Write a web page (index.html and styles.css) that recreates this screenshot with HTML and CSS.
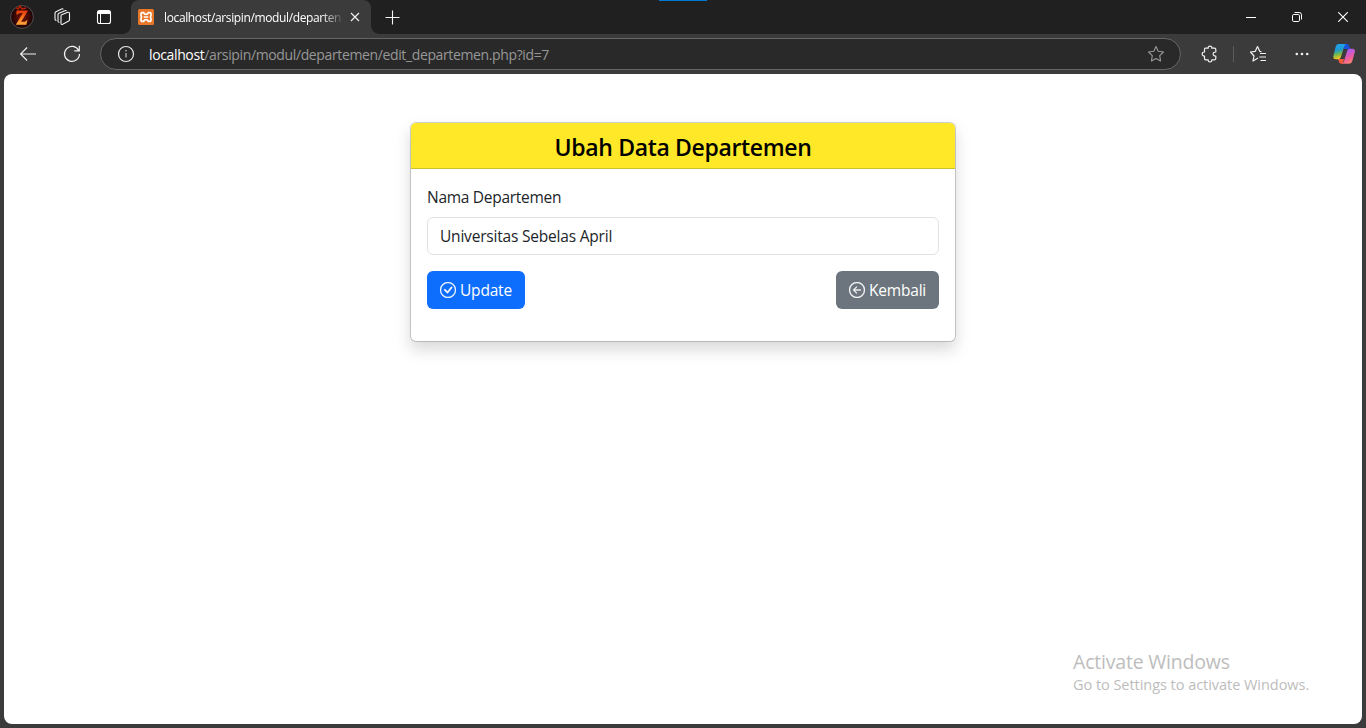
FILE: index.html
```html
<!DOCTYPE html>
<html lang="id">
<head>
<meta charset="utf-8">
<title>Ubah Data Departemen</title>
<link rel="stylesheet" href="styles.css">
</head>
<body>
<div class="browser">
  <div class="titlebar">
    <div class="cell cell-profile">
      <svg width="24" height="24" viewBox="0 0 24 24">
        <defs>
          <radialGradient id="glow"><stop offset="0" stop-color="#7a1405"/><stop offset=".65" stop-color="#3a0806"/><stop offset="1" stop-color="#160506"/></radialGradient>
          <linearGradient id="fire" x2="0" y2="1"><stop offset="0" stop-color="#e3340c"/><stop offset=".55" stop-color="#ff7d22"/><stop offset="1" stop-color="#ffa53c"/></linearGradient>
        </defs>
        <circle cx="12" cy="12" r="11.4" fill="url(#glow)" stroke="#66605f" stroke-width=".8"/>
        <path d="M6 2.5 8 4l2-3 2 3 4-1" fill="none" stroke="#b32508" stroke-width="1.4"/>
        <path d="M6.5 5.5H18l-6.8 11.2h3.6l2.7-2-1.2 5H5.8l7-11.6H9.6L6.5 10z" fill="url(#fire)"/>
      </svg>
    </div>
    <div class="cell cell-work">
      <svg width="18" height="18" viewBox="0 0 18 18" fill="none" stroke="#f2f2f2" stroke-width="1.1" stroke-linejoin="round" stroke-linecap="round">
        <path d="M8.6 6.8 14.8 4.3Q16.5 3.8 16.5 5.5V11.6Q16.5 12.6 15.7 13.1L9.7 16.2Q8 17 8 15.2V8.2Q8 7.1 8.6 6.8z"/>
        <path d="M13.2 2.7Q12.6 2.3 11.8 2.7L6 5.3Q5 5.8 5 6.8V13Q5 14.2 6 14.3"/>
        <path d="M10 1Q9.3.8 8.6 1.1L3 3.8Q2 4.3 2 5.3V11Q2 12.2 3 12.4"/>
      </svg>
    </div>
    <div class="cell cell-tabs">
      <svg width="16" height="16" viewBox="0 0 16 16">
        <rect x="1.5" y="1.5" width="13" height="13" rx="2" fill="none" stroke="#fff" stroke-width="1.1"/>
        <path d="M1.5 5V3.5a2 2 0 0 1 2-2h9a2 2 0 0 1 2 2V5z" fill="#fff"/>
        <path d="M4.5 5v9.5" stroke="#fff"/>
      </svg>
    </div>
    <div class="tab">
      <svg width="16" height="16" viewBox="0 0 16 16">
        <rect width="16" height="16" rx="1.5" fill="#e9772a"/>
        <path d="M4.2 3.6H5.6Q6.3 5.3 8 5.3T10.4 3.6H11.8Q13 3.6 13 4.8V6.3Q13 8 11.7 8 13 8 13 9.7V11.2Q13 12.4 11.8 12.4H10.4Q9.7 10.7 8 10.7T5.6 12.4H4.2Q3 12.4 3 11.2V9.7Q3 8 4.3 8 3 8 3 6.3V4.8Q3 3.6 4.2 3.6zM5.8 8H10.2" fill="none" stroke="#fff" stroke-width="1.7"/>
      </svg>
      <span class="tab-title">localhost/arsipin/modul/departen</span>
      <svg class="tab-close" width="10" height="10" viewBox="0 0 10 10"><path d="M1 1 9 9M9 1 1 9" stroke="#f0f0f0" stroke-width="1.2"/></svg>
    </div>
    <div class="cell cell-new">
      <svg width="15" height="15" viewBox="0 0 15 15"><path d="M.5 7.5h14M7.5.5v14" stroke="#f5f5f5" stroke-width="1.1"/></svg>
    </div>
    <div class="window-controls">
      <div class="cell cell-win"><svg width="10" height="10" viewBox="0 0 10 10"><path d="M0 5.5h10" stroke="#fff"/></svg></div>
      <div class="cell cell-win"><svg width="10" height="10" viewBox="0 0 10 10" fill="none" stroke="#fff"><rect x=".5" y="2.5" width="7" height="7" rx="1.3"/><path d="M2.5.5H7.2A2.3 2.3 0 0 1 9.5 2.8V7.5"/></svg></div>
      <div class="cell cell-win"><svg width="10" height="10" viewBox="0 0 10 10"><path d="M.2.2 9.8 9.8M9.8.2.2 9.8" stroke="#fff" stroke-width="1.1"/></svg></div>
    </div>
    <div class="indicator"></div>
  </div>

  <div class="toolbar">
    <div class="cell cell-back"><svg width="16" height="14" viewBox="0 0 16 14" fill="none" stroke="#f0f0f0" stroke-width="1.1"><path d="M16 7H.8M7.1.5.6 7l6.5 6.5"/></svg></div>
    <div class="cell cell-reload"><svg width="18" height="18" viewBox="0 0 18 18" fill="none" stroke="#f0f0f0" stroke-width="1.2"><path d="M15.7 5.5A7.5 7.5 0 1 0 16.5 9M16.3.8v5h-5"/></svg></div>
    <div class="address">
      <svg width="18" height="18" viewBox="0 0 18 18"><circle cx="9" cy="9" r="7.5" fill="none" stroke="#e8e8e8" stroke-width="1.2"/><path d="M9 8v4.5" stroke="#d0d0d0" stroke-width="1.1"/><circle cx="9" cy="5.7" r=".8" fill="#d0d0d0"/></svg>
      <div class="url"><span class="host">localhost</span>/arsipin/modul/departemen/edit_departemen.php?id=7</div>
      <svg class="fav" width="18" height="18" viewBox="0 0 18 18" fill="none" stroke="#999" stroke-width="1.1" stroke-linejoin="round"><path d="M9 1.5 11.2 6.3 16.5 7 12.7 10.7 13.6 16 9 13.5 4.4 16 5.3 10.7 1.5 7 6.8 6.3z"/></svg>
    </div>
    <div class="cell cell-ext"><svg width="18" height="18" viewBox="0 0 18 18" fill="none" stroke="#f0f0f0" stroke-width="1.2" stroke-linejoin="round"><path d="M4.2 3.2H7.2Q7 1.2 9 1.2T10.8 3.2H13.6Q14.8 3.2 14.8 4.4V7Q12.2 6.8 12.2 9T14.8 11V13.6Q14.8 14.8 13.6 14.8H10.8Q11 16.8 9 16.8T7.2 14.8H4.7Q3.5 14.8 3.5 13.6V11Q1.2 11 1.2 9T3.5 7V4.4Q3.5 3.2 4.2 3.2z"/></svg></div>
    <div class="separator"></div>
    <div class="cell cell-tool"><svg width="18" height="18" viewBox="0 0 18 18" fill="none" stroke="#f0f0f0" stroke-width="1.2" stroke-linejoin="round"><path d="M9 13 4 16 5 11 1.5 7 6.3 6.3 8.5 1.5 10.7 6.3 12.5 6.6M11 8.5H17M10.3 12H17M11.5 15.5H17"/></svg></div>
    <div class="cell cell-tool"><svg width="14" height="4" viewBox="0 0 14 4" fill="#f0f0f0"><circle cx="1.8" cy="2" r="1.3"/><circle cx="7" cy="2" r="1.3"/><circle cx="12.2" cy="2" r="1.3"/></svg></div>
    <div class="cell cell-copilot">
      <svg width="22" height="20" viewBox="0 0 22 20">
        <defs>
          <linearGradient id="ca" x2=".2" y2="1"><stop offset="0" stop-color="#20a6fa"/><stop offset=".45" stop-color="#1d9bd0"/><stop offset=".72" stop-color="#73b94b"/><stop offset="1" stop-color="#f4c421"/></linearGradient>
          <linearGradient id="cb" x1=".6" y2="1"><stop offset="0" stop-color="#a95bf5"/><stop offset=".5" stop-color="#ee5ba0"/><stop offset="1" stop-color="#ff9659"/></linearGradient>
        </defs>
        <path d="M11 0h3.3Q15.5 0 16 1.6L17 5H11z" fill="#1951d8"/>
        <path d="M5 15h6l-1 4.8H8.3Q6.9 19.8 6.2 18.2z" fill="#f25a3d"/>
        <path d="M5.5 0H13Q11.9.3 11.4 2L7.8 13.3Q7.2 15.2 5.3 15.2H2.7Q-.2 15.2.3 12.2L2.6 3Q3.4 0 5.5 0z" fill="url(#ca)"/>
        <path d="M16.7 4.8H19.5Q22.5 5 21.8 8L19.4 16.8Q18.5 19.8 16 19.8H9Q10.3 19.4 10.8 17.8L14.2 6.7Q14.8 4.8 16.7 4.8z" fill="url(#cb)"/>
      </svg>
    </div>
  </div>

  <main class="page">
    <section class="card">
      <h1 class="card-header"><span>Ubah Data Departemen</span></h1>
      <form class="card-body">
        <label class="label" for="nama">Nama Departemen</label>
        <input class="input" id="nama" type="text" value="Universitas Sebelas April">
        <div class="actions">
          <button class="btn btn-primary" type="button">
            <svg width="16" height="16" viewBox="0 0 16 16" fill="currentColor" stroke="currentColor" stroke-width=".3"><path d="M8 15A7 7 0 1 1 8 1a7 7 0 0 1 0 14m0 1A8 8 0 1 0 8 0a8 8 0 0 0 0 16"/><path d="m10.97 4.97-.02.022-3.473 4.425-2.093-2.094a.75.75 0 0 0-1.06 1.06L6.97 11.03a.75.75 0 0 0 1.079-.02l3.992-4.99a.75.75 0 0 0-1.071-1.05"/></svg>
            <span>Update</span>
          </button>
          <button class="btn btn-secondary" type="button">
            <svg width="16" height="16" viewBox="0 0 16 16" fill="currentColor" stroke="currentColor" stroke-width=".3"><path fill-rule="evenodd" d="M1 8a7 7 0 1 0 14 0A7 7 0 0 0 1 8m15 0A8 8 0 1 1 0 8a8 8 0 0 1 16 0m-4.5-.5a.5.5 0 0 1 0 1H5.707l2.147 2.146a.5.5 0 0 1-.708.708l-3-3a.5.5 0 0 1 0-.708l3-3a.5.5 0 1 1 .708.708L5.707 7.5z"/></svg>
            <span>Kembali</span>
          </button>
        </div>
      </form>
    </section>
    <aside class="watermark">
      <div class="watermark-title">Activate Windows</div>
      <div class="watermark-text">Go to Settings to activate Windows.</div>
    </aside>
  </main>
</div>
</body>
</html>
```

FILE: styles.css
```css
* { box-sizing: border-box; }
body { margin: 0; font-family: "Open Sans", "Noto Sans", sans-serif; overflow: hidden; }
svg { display: block; flex: none; }
.browser { width: 1366px; height: 728px; display: flex; flex-direction: column; background: #3b3b3b; }
.cell { display: flex; align-items: center; justify-content: center; flex: none; }

.titlebar { position: relative; height: 34px; flex: none; display: flex; background: #202020; }
.cell-profile { width: 44px; }
.cell-work { width: 36px; }
.cell-tabs { width: 48px; }
.tab { position: relative; width: 240px; margin-left: 3px; padding: 0 11px 0 7px; display: flex; align-items: center; background: #3b3b3b; border-radius: 8px 8px 0 0; }
.tab::before, .tab::after { content: ""; position: absolute; bottom: 0; width: 8px; height: 8px; }
.tab::before { left: -8px; background: radial-gradient(circle at 0 0, #202020 7.5px, #3b3b3b 8px); }
.tab::after { right: -8px; background: radial-gradient(circle at 100% 0, #202020 7.5px, #3b3b3b 8px); }
.tab-title { width: 180px; margin-left: 10px; white-space: nowrap; font-size: 12px; letter-spacing: -0.37px; color: #fff; -webkit-mask-image: linear-gradient(to right, #000 158px, transparent 180px); mask-image: linear-gradient(to right, #000 158px, transparent 180px); }
.tab-close { margin-left: auto; }
.cell-new { width: 43px; }
.window-controls { margin-left: auto; display: flex; }
.cell-win { width: 46px; }
.indicator { position: absolute; top: 0; left: 659px; width: 48px; height: 1px; background: #0078d4; }

.toolbar { height: 40px; flex: none; display: flex; align-items: center; }
.cell-back { width: 56px; }
.cell-reload { width: 32px; }
.address { width: 1081px; height: 32px; margin-left: 12px; padding: 0 15px 0 16px; display: flex; align-items: center; background: #292929; border: 1px solid #666; border-radius: 16px; }
.url { margin-left: 14px; font-size: 14px; letter-spacing: -0.37px; color: #979797; white-space: nowrap; }
.host { color: #fff; }
.fav { margin-left: auto; }
.cell-ext { width: 40px; margin-left: 9px; }
.separator { width: 1px; height: 16px; margin-left: 3px; background: #5c5c5c; }
.cell-tool { width: 40px; margin-left: 4px; }
.cell-copilot { width: 44px; }

.page { flex: 1; margin: 0 4px 4px; display: flex; flex-direction: column; align-items: center; justify-content: space-between; padding: 48px 0 29px; background: #fff; border-radius: 8px; }
.card { width: 546px; height: 220px; border: 1px solid rgba(0,0,0,.176); border-radius: 6px; box-shadow: 0 8px 16px rgba(0,0,0,.15); background: #fff; background-clip: padding-box; color: #212529; }
.card-header { height: 46px; margin: 0; padding-top: 2px; display: flex; align-items: center; justify-content: center; background: #ffe827; border-bottom: 1px solid #cfc12b; border-radius: 5px 5px 0 0; font-size: 23px; font-weight: 600; letter-spacing: -0.35px; color: #000; }
.card-body { padding: 16px; }
.label { display: block; height: 24px; line-height: 24px; margin-bottom: 8px; font-size: 15.5px; letter-spacing: -0.28px; }
.input { display: block; width: 100%; height: 38px; padding: 0 12px; border: 1px solid #dee2e6; border-radius: 6px; font: 15.5px "Open Sans", "Noto Sans", sans-serif; letter-spacing: -0.2px; color: #212529; outline: none; }
.actions { display: flex; justify-content: space-between; margin-top: 16px; }
.btn { height: 38px; padding: 0 13px; display: flex; align-items: center; gap: 4px; border: 0; border-radius: 6px; font: 15.5px "Open Sans", "Noto Sans", sans-serif; letter-spacing: -0.2px; color: #fff; white-space: nowrap; }
.btn-primary { width: 98px; background: #0d6efd; }
.btn-secondary { width: 103px; background: #6c757d; }

.watermark { align-self: flex-end; width: 289px; color: #bdbdbd; white-space: nowrap; }
.watermark-title { font-size: 19.5px; letter-spacing: -0.2px; line-height: 24px; }
.watermark-text { font-size: 14.5px; letter-spacing: -0.04px; line-height: 21px; }
```
